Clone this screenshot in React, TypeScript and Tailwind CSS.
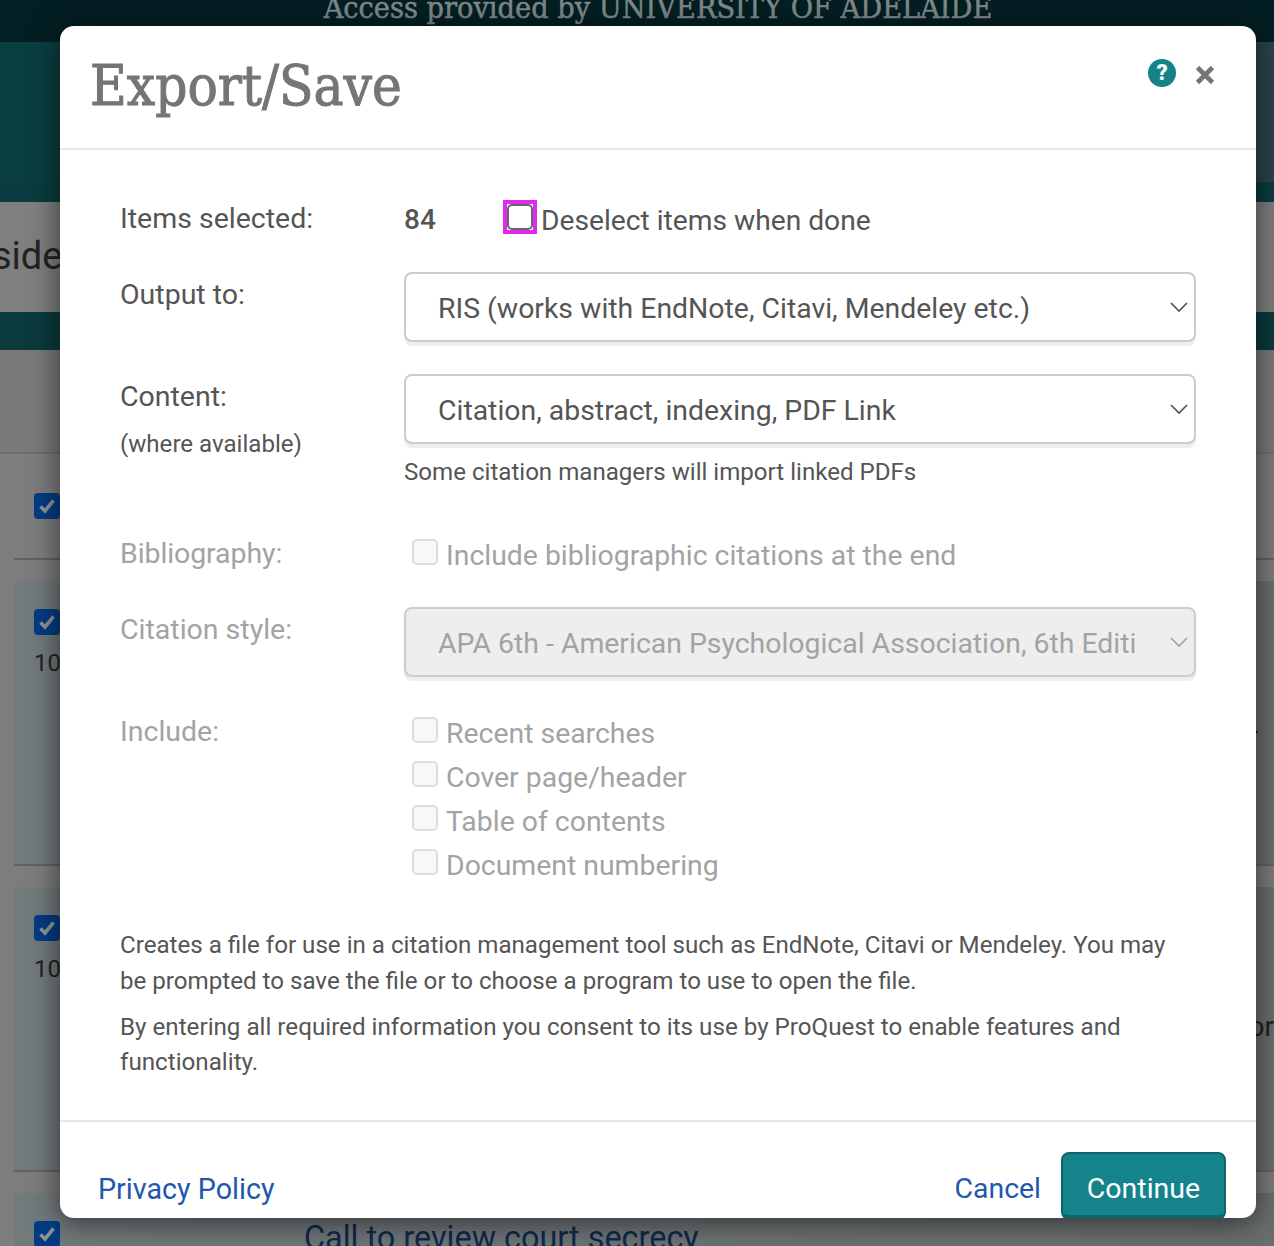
const roboto = "font-['Roboto',sans-serif]";
const slab = "font-['DejaVu_Serif_Condensed','DejaVu_Serif',serif]";

function BgCheck() {
  return (
    <div className="w-[26px] h-[26px] rounded-[4px] bg-[#033c85] flex items-center justify-center">
      <svg width="20" height="20" viewBox="0 0 20 20" fill="none">
        <path d="M3.5 10.5 L8 15 L16.5 4.5" stroke="#8f9499" strokeWidth="3.6" />
      </svg>
    </div>
  );
}

function BgRow({ h, num, children }: { h: number; num?: boolean; children?: React.ReactNode }) {
  return (
    <div className="ml-[14px] mt-[21px] border-b-2 border-[#626262] bg-gradient-to-r from-[#727a7c] to-[#696e6f] pl-[20px] pt-[28px] relative" style={{ height: h }}>
      <BgCheck />
      {num && <div className="text-[24px] leading-[28px] mt-[14px] text-[#222]">10</div>}
      {children}
    </div>
  );
}

function Chevron({ color }: { color: string }) {
  return (
    <svg width="20" height="12" viewBox="0 0 20 12" fill="none" className="shrink-0">
      <path d="M2 2 L10 10 L18 2" stroke={color} strokeWidth="1.7" />
    </svg>
  );
}

function Select({ text, disabled }: { text: string; disabled?: boolean }) {
  return (
    <div className={`h-[70px] rounded-[8px] border-2 border-[#cccccc] shadow-[0_4px_0_#eeeeee] flex items-center pl-[32px] pr-[5px] text-[28.4px] ${disabled ? 'bg-[#eeeeee] text-[#a3a3a3]' : 'bg-white text-[#555555]'}`}>
      <span className="w-[700px] flex-1 overflow-hidden whitespace-nowrap mr-[32px] pt-[5px]">{text}</span>
      <Chevron color={disabled ? '#a3a3a3' : '#555555'} />
    </div>
  );
}

function DisabledCheck({ label }: { label: string }) {
  return (
    <div className="flex items-start h-[44px] pl-[8px]">
      <span className="w-[26px] h-[26px] mt-[1px] rounded-[5px] border-2 border-[#dcdcdc] bg-[#f8f8f8] shrink-0" />
      <span className="ml-[8px] text-[28.4px] leading-[34px] mt-[1px] text-[#a3a3a3] whitespace-nowrap">{label}</span>
    </div>
  );
}

function Row({ label, labelCls, className, children }: { label: React.ReactNode; labelCls?: string; className?: string; children: React.ReactNode }) {
  return (
    <div className={`flex ${className ?? ''}`}>
      <div className={`w-[284px] shrink-0 text-[28.5px] leading-[34px] ${labelCls ?? 'text-[#555555] mt-[6px]'}`}>{label}</div>
      <div className="flex-1 min-w-0">{children}</div>
    </div>
  );
}

export default function App() {
  return (
    <div className={`relative w-[1274px] h-[1246px] overflow-hidden bg-[#7d7d7d] ${roboto}`}>
      {/* page behind the dialog */}
      <div className="h-[42px] bg-[#041f23] flex justify-center overflow-hidden pl-[42px]">
        <span className={`${slab} text-[#7f8a8b] text-[30.3px] leading-[20px] -mt-[2px] whitespace-nowrap [-webkit-text-stroke:0.5px_#7f8a8b]`}>Access provided by UNIVERSITY OF ADELAIDE</span>
      </div>
      <div className="h-[140px] bg-gradient-to-r from-[#0a3f42] via-[#0c3b3e] to-[#2a4548]" />
      <div className="h-[20px] bg-[#0b3c3f]" />
      <div className="h-[110px] bg-[#7f7f7f] flex items-center overflow-hidden">
        <span className="text-[38px] text-[#222] -ml-[8px] -mt-[1px]">side'</span>
      </div>
      <div className="h-[38px] bg-[#0b3a3d]" />
      <div className="h-[104px] bg-[#7a7a7a] border-b-2 border-[#6f6f6f]" />
      <div className="ml-[14px] h-[106px] border-b-2 border-[#626262] pl-[20px] pt-[39px]">
        <BgCheck />
      </div>
      <BgRow h={285} num>
        <div className="absolute right-[16px] top-[150px] w-[2px] h-[2px] bg-[#222]" />
      </BgRow>
      <BgRow h={285} num>
        <div className="absolute right-[0px] top-[122px] text-[28px] leading-[36px] text-[#222]">or</div>
      </BgRow>
      <BgRow h={80}>
        <div className="absolute left-[290px] top-[27px] text-[32.4px] leading-[36px] text-[#10294b] whitespace-nowrap">Call to review court secrecy</div>
      </BgRow>

      {/* dialog */}
      <div className="absolute left-[60px] top-[26px] w-[1196px] h-[1192px] bg-white rounded-[14px] overflow-hidden shadow-[0_4px_30px_rgba(0,0,0,0.6)] flex flex-col">
        <div className="h-[124px] shrink-0 border-b-2 border-[#e6e6e6] flex justify-between pl-[30px] pr-[41px]">
          <h1 className={`${slab} text-[56px] leading-[60px] mt-[30px] text-[#757575] whitespace-nowrap [-webkit-text-stroke:1px_#757575]`}>Export/Save</h1>
          <div className="flex items-start gap-[19px] h-[28px] mt-[33px]">
            <div className="w-[28px] h-[28px] rounded-full bg-[#14838a] flex items-center justify-center text-white font-black text-[22px] leading-none">?</div>
            <svg width="20" height="20" viewBox="0 0 20 20" className="mt-[6px]">
              <path d="M2.5 2.5 L17.5 17.5 M17.5 2.5 L2.5 17.5" stroke="#757575" strokeWidth="4.6" />
            </svg>
          </div>
        </div>

        <div className="flex-1 min-h-0 px-[60px] pt-[50px]">
          <Row label="Items selected:" labelCls="text-[#555555] mt-[2px] text-[28.3px]" className="h-[72px]">
            <div className="flex items-start text-[#555555]">
              <span className="text-[28px] leading-[34px] font-medium w-[99px] mt-[3px]">84</span>
              <span className="w-[34px] h-[34px] border-[4px] border-[#e029ee] flex items-center justify-center shrink-0">
                <span className="w-[26px] h-[26px] rounded-[5px] border-2 border-[#666666] bg-white shrink-0" />
              </span>
              <span className="ml-[4px] mt-[4px] text-[28.2px] leading-[34px] whitespace-nowrap">Deselect items when done</span>
            </div>
          </Row>
          <Row label="Output to:" className="h-[102px]">
            <Select text="RIS (works with EndNote, Citavi, Mendeley etc.)" />
          </Row>
          <Row label={<>Content:<div className="text-[24.1px] mt-[13px]">(where available)</div></>} className="h-[165px]">
            <Select text="Citation, abstract, indexing, PDF Link" />
            <p className="text-[24.1px] leading-[30px] text-[#555555] mt-[13px]">Some citation managers will import linked PDFs</p>
          </Row>
          <Row label="Bibliography:" labelCls="text-[#a3a3a3] -mt-[2px] tracking-[-0.1px]" className="h-[68px]">
            <div className="-mt-[1px]">
              <DisabledCheck label="Include bibliographic citations at the end" />
            </div>
          </Row>
          <Row label="Citation style:" labelCls="text-[#a3a3a3] mt-[6px]" className="h-[102px]">
            <Select text="APA 6th - American Psychological Association, 6th Edition" disabled />
          </Row>
          <Row label="Include:" labelCls="text-[#a3a3a3] mt-[6px]" className="h-[218px]">
            <div className="pt-[7px]">
              <DisabledCheck label="Recent searches" />
              <DisabledCheck label="Cover page/header" />
              <DisabledCheck label="Table of contents" />
              <DisabledCheck label="Document numbering" />
            </div>
          </Row>
          <p className="text-[24.13px] leading-[36px] text-[#555555]">
            Creates a file for use in a citation management tool such as EndNote, Citavi or Mendeley. You may be prompted to save the file or to choose a program to use to open the file.
          </p>
          <p className="text-[24.2px] leading-[35px] text-[#555555] mt-[11px]">
            By entering all required information you consent to its use by ProQuest to enable features and functionality.
          </p>
        </div>

        <div className="h-[98px] shrink-0 border-t-2 border-[#e6e6e6] flex items-start pl-[38px] pr-[30px] pt-[30px]">
          <a className="text-[#2258ac] text-[28.7px] leading-[34px] mt-[20px]">Privacy Policy</a>
          <a className="ml-auto text-[#2258ac] text-[28.4px] leading-[34px] mt-[20px]">Cancel</a>
          <button className="ml-[20px] w-[165px] h-[68px] shrink-0 rounded-[8px] bg-[#14838a] border-2 border-[#0d666c] border-b-[5px] text-white text-[28.5px] pt-[10px]">Continue</button>
        </div>
      </div>
    </div>
  );
}
